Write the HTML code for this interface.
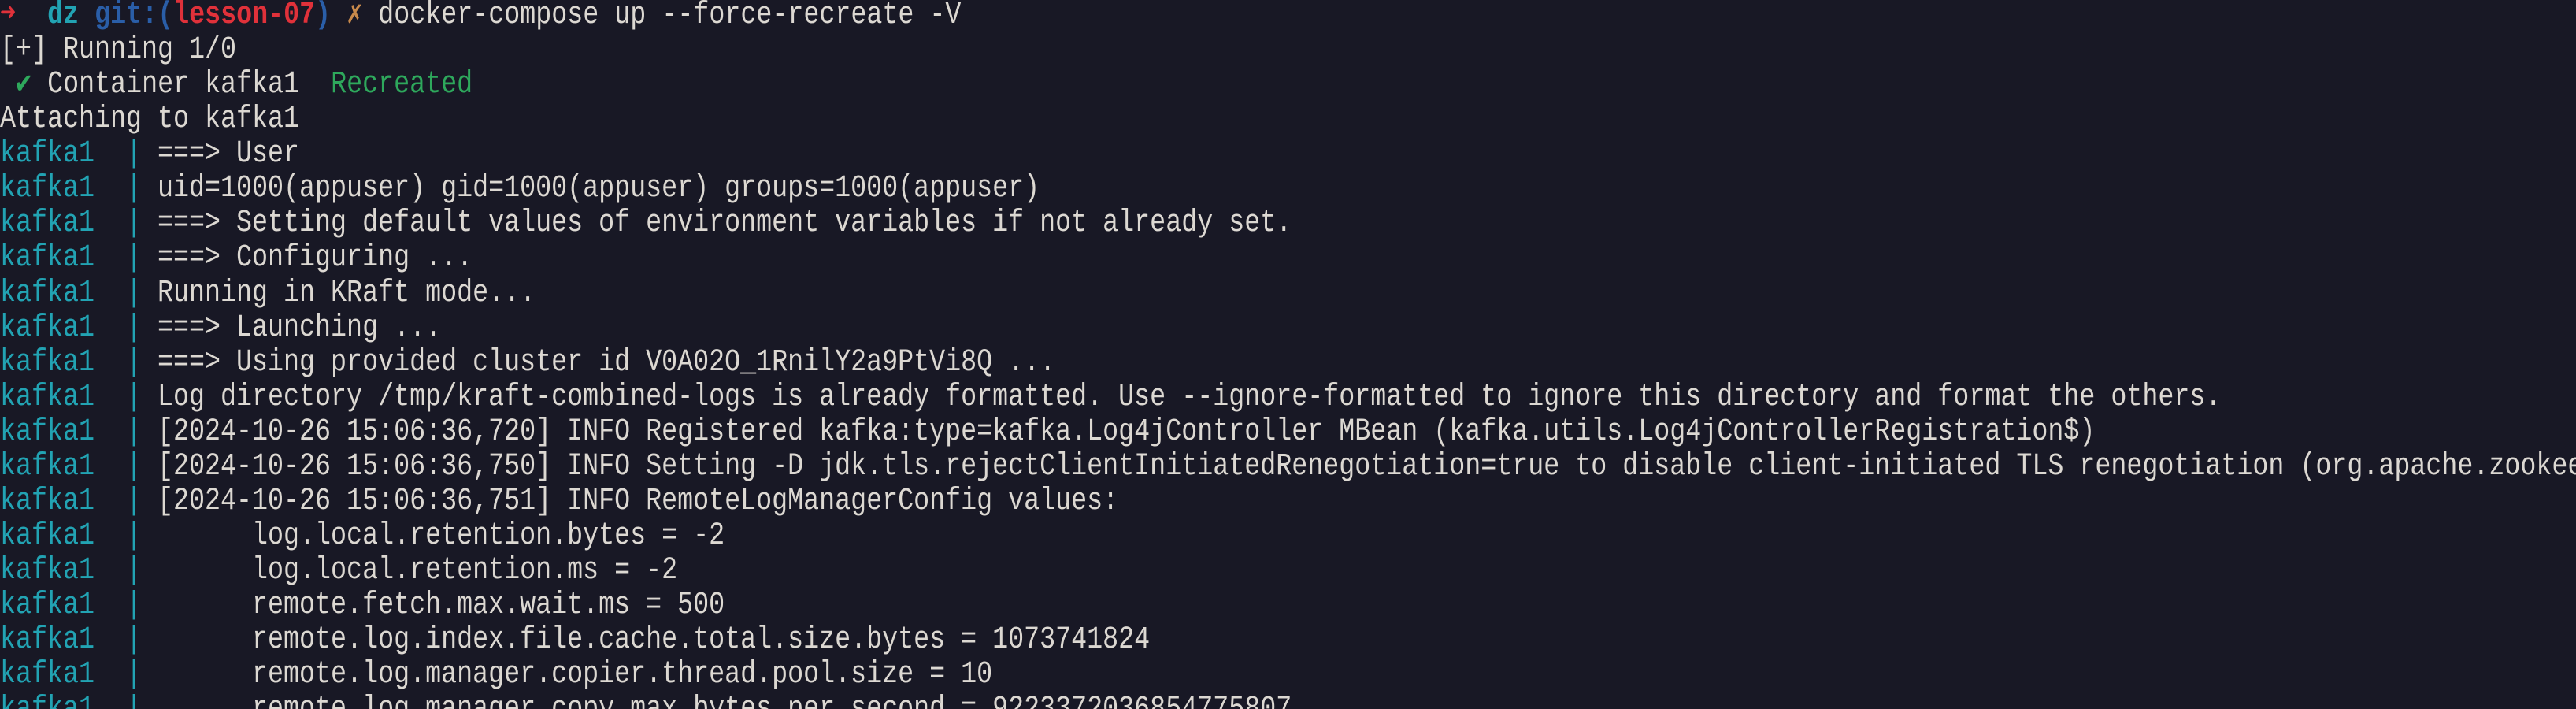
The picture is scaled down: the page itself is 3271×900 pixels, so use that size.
<!DOCTYPE html>
<html><head><meta charset="utf-8"><style>
html,body{margin:0;padding:0;background:#181825;width:3271px;height:900px;overflow:hidden}
#w{position:absolute;left:0;top:0;width:3271px;height:900px;overflow:hidden}
pre{margin:0;padding:0;position:absolute;left:0;top:-2px;font-family:"Liberation Mono","DejaVu Sans Mono",monospace;font-size:40px;line-height:44.07px;color:#dcd8d2;white-space:pre;transform:scaleX(0.8333);transform-origin:0 0}
.c{color:#22a3b3}.r{color:#e0313a;font-weight:bold}.b{color:#2a5ea8;font-weight:bold}.cb{color:#22a3b3;font-weight:bold}.x{color:#c98a4b}.g{color:#2ea85c}
</style></head><body><div id="w"><pre><span class="r">➜</span>  <span class="cb">dz</span> <span class="b">git:(</span><span class="r">lesson-07</span><span class="b">)</span> <span class="x">✗</span> docker-compose up --force-recreate -V
[+] Running 1/0
 <span class="g">✔</span> Container kafka1  <span class="g">Recreated</span>
Attaching to kafka1
<span class="c">kafka1  | </span>===&gt; User
<span class="c">kafka1  | </span>uid=1000(appuser) gid=1000(appuser) groups=1000(appuser)
<span class="c">kafka1  | </span>===&gt; Setting default values of environment variables if not already set.
<span class="c">kafka1  | </span>===&gt; Configuring ...
<span class="c">kafka1  | </span>Running in KRaft mode...
<span class="c">kafka1  | </span>===&gt; Launching ...
<span class="c">kafka1  | </span>===&gt; Using provided cluster id V0A02O_1RnilY2a9PtVi8Q ...
<span class="c">kafka1  | </span>Log directory /tmp/kraft-combined-logs is already formatted. Use --ignore-formatted to ignore this directory and format the others.
<span class="c">kafka1  | </span>[2024-10-26 15:06:36,720] INFO Registered kafka:type=kafka.Log4jController MBean (kafka.utils.Log4jControllerRegistration$)
<span class="c">kafka1  | </span>[2024-10-26 15:06:36,750] INFO Setting -D jdk.tls.rejectClientInitiatedRenegotiation=true to disable client-initiated TLS renegotiation (org.apache.zookee
<span class="c">kafka1  | </span>[2024-10-26 15:06:36,751] INFO RemoteLogManagerConfig values:
<span class="c">kafka1  | </span>      log.local.retention.bytes = -2
<span class="c">kafka1  | </span>      log.local.retention.ms = -2
<span class="c">kafka1  | </span>      remote.fetch.max.wait.ms = 500
<span class="c">kafka1  | </span>      remote.log.index.file.cache.total.size.bytes = 1073741824
<span class="c">kafka1  | </span>      remote.log.manager.copier.thread.pool.size = 10
<span class="c">kafka1  | </span>      remote.log.manager.copy.max.bytes.per.second = 9223372036854775807
</pre></div></body></html>
